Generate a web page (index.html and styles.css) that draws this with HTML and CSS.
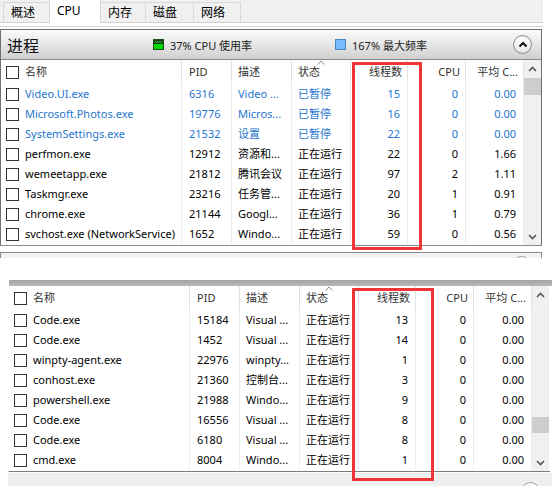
FILE: index.html
```html
<!DOCTYPE html>
<html lang="zh-CN">
<head>
<meta charset="utf-8">
<title>任务管理器 - CPU</title>
<link rel="stylesheet" href="styles.css">
</head>
<body>
<div class="shot1">
  <div class="tabs">
    <div class="tab t1">概述</div>
    <div class="tab t2 active">CPU</div>
    <div class="tab t3">内存</div>
    <div class="tab t4">磁盘</div>
    <div class="tab t5">网络</div>
  </div>
  <div class="tabstrip"></div>
  <div class="panel">
    <div class="phead">
      <div class="ptitle">进程</div>
      <div class="legend legend-cpu">
        <svg class="licon" width="11" height="11" viewBox="0 0 11 11"><rect x="0.5" y="0.5" width="10" height="10" fill="#00dc00" stroke="#1d4f1d"/><rect x="1" y="1" width="9" height="4" fill="#123c12"/><g fill="#3fbf3f"><rect x="2" y="2" width="1" height="1"/><rect x="4" y="2" width="1" height="1"/><rect x="6" y="2" width="1" height="1"/><rect x="8" y="2" width="1" height="1"/><rect x="3" y="3" width="1" height="1"/><rect x="5" y="3" width="1" height="1"/><rect x="7" y="3" width="1" height="1"/></g></svg>
        <span>37% CPU 使用率</span>
      </div>
      <div class="legend legend-freq">
        <svg class="licon" width="11" height="11" viewBox="0 0 11 11"><rect x="0.5" y="0.5" width="10" height="10" fill="#78bcff" stroke="#4a86c4"/></svg>
        <span>167% 最大频率</span>
      </div>
      <div class="collapse"><svg width="10" height="7" viewBox="0 0 10 7"><path d="M1.5 5.5 L5 2 L8.5 5.5" fill="none" stroke="#111" stroke-width="2"/></svg></div>
    </div>
    <div class="tbl">
      <div class="rows">
        <div class="row hrow">
          <div class="c name"><span class="cb"></span>名称</div>
          <div class="c">PID</div>
          <div class="c">描述</div>
          <div class="c sorted">状态<svg class="sortarrow" width="8" height="5" viewBox="0 0 8 5"><path d="M0.5 4.5 L4 1 L7.5 4.5" fill="none" stroke="#8a8a8a" stroke-width="1"/></svg></div>
          <div class="c r">线程数</div>
          <div class="c r">CPU</div>
          <div class="c r">平均 C...</div>
        </div>
        <div class="row blue"><div class="c name"><span class="cb"></span>Video.UI.exe</div><div class="c">6316</div><div class="c">Video ...</div><div class="c">已暂停</div><div class="c r">15</div><div class="c r">0</div><div class="c r">0.00</div></div>
        <div class="row blue"><div class="c name"><span class="cb"></span>Microsoft.Photos.exe</div><div class="c">19776</div><div class="c">Micros...</div><div class="c">已暂停</div><div class="c r">16</div><div class="c r">0</div><div class="c r">0.00</div></div>
        <div class="row blue"><div class="c name"><span class="cb"></span>SystemSettings.exe</div><div class="c">21532</div><div class="c">设置</div><div class="c">已暂停</div><div class="c r">22</div><div class="c r">0</div><div class="c r">0.00</div></div>
        <div class="row"><div class="c name"><span class="cb"></span>perfmon.exe</div><div class="c">12912</div><div class="c">资源和...</div><div class="c">正在运行</div><div class="c r">22</div><div class="c r">0</div><div class="c r">1.66</div></div>
        <div class="row"><div class="c name"><span class="cb"></span>wemeetapp.exe</div><div class="c">21812</div><div class="c">腾讯会议</div><div class="c">正在运行</div><div class="c r">97</div><div class="c r">2</div><div class="c r">1.11</div></div>
        <div class="row"><div class="c name"><span class="cb"></span>Taskmgr.exe</div><div class="c">23216</div><div class="c">任务管...</div><div class="c">正在运行</div><div class="c r">20</div><div class="c r">1</div><div class="c r">0.91</div></div>
        <div class="row"><div class="c name"><span class="cb"></span>chrome.exe</div><div class="c">21144</div><div class="c">Googl...</div><div class="c">正在运行</div><div class="c r">36</div><div class="c r">1</div><div class="c r">0.79</div></div>
        <div class="row"><div class="c name"><span class="cb"></span>svchost.exe (NetworkService)</div><div class="c">1652</div><div class="c">Windo...</div><div class="c">正在运行</div><div class="c r">59</div><div class="c r">0</div><div class="c r">0.56</div></div>
      </div>
      <div class="scroll s1">
        <div class="sbtn"><svg width="9" height="6" viewBox="0 0 9 6"><path d="M1 5 L4.5 1.5 L8 5" fill="none" stroke="#555" stroke-width="1.6"/></svg></div>
        <div class="track"><div class="thumb"></div></div>
        <div class="sbtn"><svg width="9" height="6" viewBox="0 0 9 6"><path d="M1 1 L4.5 4.5 L8 1" fill="none" stroke="#555" stroke-width="1.6"/></svg></div>
      </div>
    </div>
  </div>
  <div class="stub"><div class="stubbtn"></div></div>
  <div class="redbox rb1"></div>
</div>

<div class="shot2">
  <div class="strip"></div>
  <div class="tbl tbl2">
    <div class="rows">
      <div class="row hrow">
        <div class="c name"><span class="cb"></span>名称</div>
        <div class="c">PID</div>
        <div class="c">描述</div>
        <div class="c sorted">状态<svg class="sortarrow" width="8" height="5" viewBox="0 0 8 5"><path d="M0.5 4.5 L4 1 L7.5 4.5" fill="none" stroke="#8a8a8a" stroke-width="1"/></svg></div>
        <div class="c r">线程数</div>
        <div class="c r">CPU</div>
        <div class="c r">平均 C...</div>
      </div>
      <div class="row"><div class="c name"><span class="cb"></span>Code.exe</div><div class="c">15184</div><div class="c">Visual ...</div><div class="c">正在运行</div><div class="c r">13</div><div class="c r">0</div><div class="c r">0.00</div></div>
      <div class="row"><div class="c name"><span class="cb"></span>Code.exe</div><div class="c">1452</div><div class="c">Visual ...</div><div class="c">正在运行</div><div class="c r">14</div><div class="c r">0</div><div class="c r">0.00</div></div>
      <div class="row"><div class="c name"><span class="cb"></span>winpty-agent.exe</div><div class="c">22976</div><div class="c">winpty...</div><div class="c">正在运行</div><div class="c r">1</div><div class="c r">0</div><div class="c r">0.00</div></div>
      <div class="row"><div class="c name"><span class="cb"></span>conhost.exe</div><div class="c">21360</div><div class="c">控制台...</div><div class="c">正在运行</div><div class="c r">3</div><div class="c r">0</div><div class="c r">0.00</div></div>
      <div class="row"><div class="c name"><span class="cb"></span>powershell.exe</div><div class="c">21988</div><div class="c">Windo...</div><div class="c">正在运行</div><div class="c r">9</div><div class="c r">0</div><div class="c r">0.00</div></div>
      <div class="row"><div class="c name"><span class="cb"></span>Code.exe</div><div class="c">16556</div><div class="c">Visual ...</div><div class="c">正在运行</div><div class="c r">8</div><div class="c r">0</div><div class="c r">0.00</div></div>
      <div class="row"><div class="c name"><span class="cb"></span>Code.exe</div><div class="c">6180</div><div class="c">Visual ...</div><div class="c">正在运行</div><div class="c r">8</div><div class="c r">0</div><div class="c r">0.00</div></div>
      <div class="row"><div class="c name"><span class="cb"></span>cmd.exe</div><div class="c">8004</div><div class="c">Windo...</div><div class="c">正在运行</div><div class="c r">1</div><div class="c r">0</div><div class="c r">0.00</div></div>
    </div>
    <div class="scroll s2">
      <div class="sbtn"><svg width="9" height="6" viewBox="0 0 9 6"><path d="M1 5 L4.5 1.5 L8 5" fill="none" stroke="#555" stroke-width="1.6"/></svg></div>
      <div class="track"><div class="thumb"></div></div>
      <div class="sbtn"><svg width="9" height="6" viewBox="0 0 9 6"><path d="M1 1 L4.5 4.5 L8 1" fill="none" stroke="#555" stroke-width="1.6"/></svg></div>
    </div>
  </div>
  <div class="stub2"><div class="stubbtn"></div></div>
  <div class="redbox rb2"></div>
</div>
</body>
</html>
```

FILE: styles.css
```css
* { box-sizing: border-box; }
html, body { margin: 0; padding: 0; background: #fff; }
body {
  width: 552px;
  height: 486px;
  overflow: hidden;
  font-family: "Noto Sans", "Noto Sans CJK SC", sans-serif;
  font-size: 11px;
  color: #000;
}

/* ---------- first capture ---------- */
.shot1 {
  position: relative;
  height: 258px;
  overflow: hidden;
}
.tabs {
  width: 543px;
  height: 23px;
  background: #f0f0f0;
  border-bottom: 1px solid #d2d2d2;
  display: flex;
  align-items: flex-end;
  padding-left: 3px;
}
.tab {
  height: 20px;
  border: 1px solid #d9d9d9;
  border-bottom: none;
  margin-right: -1px;
  padding-left: 7px;
  font-size: 12px;
  line-height: 19px;
  color: #000;
  background: #f0f0f0;
}
.t1 { width: 47px; }
.t2 { width: 52px; }
.t3 { width: 46px; }
.t4 { width: 49px; }
.t5 { width: 48px; }
.tab.active {
  height: 24px;
  margin-bottom: -1px;
  background: #fff;
  line-height: 21px;
}
.tabstrip {
  width: 543px;
  height: 4px;
  background: #fff;
  border-bottom: 1px solid #d2d2d2;
  margin-bottom: 2px;
}
.panel {
  width: 542px;
  border: 1px solid #707070;
  border-top-color: #6a6a6a;
  border-bottom-color: #8c8c8c;
}
.phead {
  height: 30px;
  border-bottom: 1px solid #8a8a8a;
  background: linear-gradient(#fbfbfb 0%, #e9e9e9 45%, #cfcfcf 100%);
  display: grid;
  grid-template-columns: 146px 182px 1fr 28px;
  align-items: center;
  padding-left: 6px;
}
.ptitle {
  font-family: "Noto Sans CJK SC", sans-serif;
  font-size: 16px;
  color: #111;
  line-height: 20px;
}
.legend {
  display: flex;
  align-items: center;
  gap: 6px;
  font-size: 11px;
  color: #222;
}
.licon { display: block; flex: none; }
.collapse {
  width: 19px;
  height: 19px;
  border-radius: 50%;
  border: 1px solid #8d8d8d;
  background: radial-gradient(circle at 50% 35%, #ffffff 0%, #f2f2f2 50%, #cfcfcf 100%);
  display: flex;
  align-items: center;
  justify-content: center;
}
.collapse svg { display: block; margin-top: -1px; }

.tbl { display: flex; }
.rows { width: 523px; padding-bottom: 1px; }
.row {
  display: grid;
  grid-template-columns: 181px 50px 60px 59px 57px 58px 58px;
  height: 20px;
  line-height: 20px;
}
.row .c {
  border-right: 1px solid #e7edf4;
  padding-left: 6px;
  white-space: nowrap;
  overflow: hidden;
}
.row .c.name {
  padding-left: 5px;
  display: flex;
  align-items: center;
  gap: 6px;
}
.row .c.r {
  text-align: right;
  padding-left: 0;
  padding-right: 7px;
}
.row .c:nth-child(2) { padding-left: 7px; }
.hrow { height: 24px; line-height: 24px; color: #333; }
.hrow .c { border-right-color: #e2e2e2; }
.hrow .c.r { padding-right: 5px; }
.hrow .c.sorted { position: relative; }
.sortarrow { position: absolute; left: 25px; top: 0; }
.cb {
  width: 13px;
  height: 13px;
  border: 1px solid #333;
  background: #fff;
  flex: none;
}
.row.blue { color: #1f76cf; }

.scroll {
  width: 17px;
  background: #f0f0f0;
  display: flex;
  flex-direction: column;
}
.sbtn {
  height: 17px;
  display: flex;
  align-items: center;
  justify-content: center;
  flex: none;
}
.sbtn svg { display: block; }
.track { flex: 1; }
.thumb { width: 17px; background: #cdcdcd; }
.s1 .thumb { margin-top: 1px; height: 17px; }
.s2 .thumb { margin-top: 114px; height: 16px; }

.stub {
  width: 542px;
  height: 20px;
  margin-top: 6px;
  border: 1px solid #8a8a8a;
  border-bottom: none;
  background: #f2f2f2;
  display: flex;
  justify-content: flex-end;
  padding-right: 10px;
  padding-top: 3px;
}
.stubbtn {
  width: 19px;
  height: 19px;
  border-radius: 50%;
  border: 1px solid #a0a0a0;
  background: #fafafa;
}

.redbox {
  position: absolute;
  border: 3px solid #ef3535;
  pointer-events: none;
}
.rb1 { left: 352px; top: 62px; width: 70px; height: 188px; }

/* ---------- second capture ---------- */
.shot2 {
  position: relative;
  margin-top: 22px;
  margin-left: 8px;
  height: 206px;
  overflow: hidden;
}
.strip {
  height: 6px;
  margin-left: 1px;
  background: linear-gradient(#a4a4a4, #b9b9b9);
}
.tbl2 {
  width: 542px;
  border-left: 1px solid transparent;
  border-bottom: 1px solid #7c7c7c;
}
.tbl2 .rows { padding-bottom: 1px; }
.stub2 {
  height: 20px;
  margin-top: 1px;
  background: #efefef;
  display: flex;
  justify-content: flex-end;
  padding-right: 12px;
  padding-top: 9px;
}
.rb2 { left: 344px; top: 8px; width: 82px; height: 193px; }
```
